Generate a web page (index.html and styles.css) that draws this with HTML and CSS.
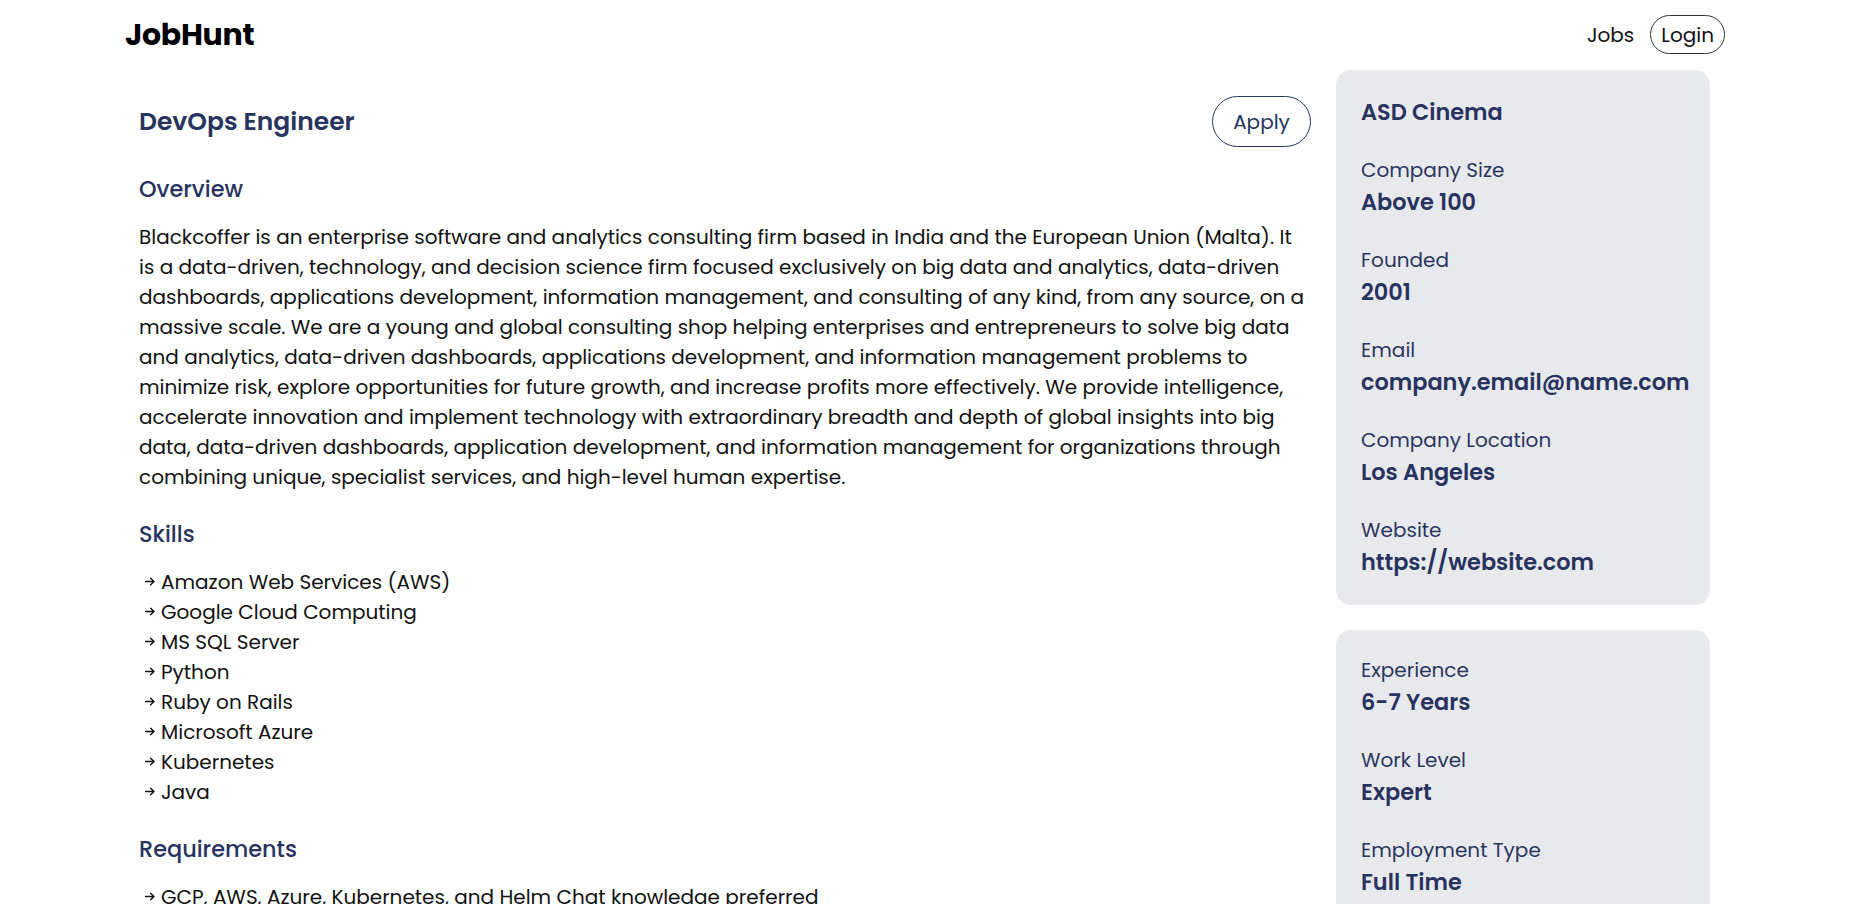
FILE: index.html
```html
<!DOCTYPE html>
<html lang="en">
<head>
<meta charset="utf-8">
<title>JobHunt - DevOps Engineer</title>
<link rel="stylesheet" href="styles.css">
</head>
<body>
<div class="container">
  <header class="header">
    <a class="logo" href="#">JobHunt</a>
    <nav class="nav">
      <a class="nav-link" href="#">Jobs</a>
      <a class="nav-login" href="#">Login</a>
    </nav>
  </header>

  <main class="main">
    <section class="job">
      <div class="job-head">
        <h1 class="job-title">DevOps Engineer</h1>
        <button class="apply-btn">Apply</button>
      </div>

      <h3 class="section-title">Overview</h3>
      <p class="body-text">Blackcoffer is an enterprise software and analytics consulting firm based in India and the European Union (Malta). It is a data-driven, technology, and decision science firm focused exclusively on big data and analytics, data-driven dashboards, applications development, information management, and consulting of any kind, from any source, on a massive scale. We are a young and global consulting shop helping enterprises and entrepreneurs to solve big data and analytics, data-driven dashboards, applications development, and information management problems to minimize risk, explore opportunities for future growth, and increase profits more effectively. We provide intelligence, accelerate innovation and implement technology with extraordinary breadth and depth of global insights into big data, data-driven dashboards, application development, and information management for organizations through combining unique, specialist services, and high-level human expertise.</p>

      <h3 class="section-title">Skills</h3>
      <ul class="arrow-list">
        <li><svg class="arrow" viewBox="0 0 10 9" width="10" height="9"><path d="M0.5 4.5H9M5.6 1.2L9 4.5L5.6 7.8"/></svg>Amazon Web Services (AWS)</li>
        <li><svg class="arrow" viewBox="0 0 10 9" width="10" height="9"><path d="M0.5 4.5H9M5.6 1.2L9 4.5L5.6 7.8"/></svg>Google Cloud Computing</li>
        <li><svg class="arrow" viewBox="0 0 10 9" width="10" height="9"><path d="M0.5 4.5H9M5.6 1.2L9 4.5L5.6 7.8"/></svg>MS SQL Server</li>
        <li><svg class="arrow" viewBox="0 0 10 9" width="10" height="9"><path d="M0.5 4.5H9M5.6 1.2L9 4.5L5.6 7.8"/></svg>Python</li>
        <li><svg class="arrow" viewBox="0 0 10 9" width="10" height="9"><path d="M0.5 4.5H9M5.6 1.2L9 4.5L5.6 7.8"/></svg>Ruby on Rails</li>
        <li><svg class="arrow" viewBox="0 0 10 9" width="10" height="9"><path d="M0.5 4.5H9M5.6 1.2L9 4.5L5.6 7.8"/></svg>Microsoft Azure</li>
        <li><svg class="arrow" viewBox="0 0 10 9" width="10" height="9"><path d="M0.5 4.5H9M5.6 1.2L9 4.5L5.6 7.8"/></svg>Kubernetes</li>
        <li><svg class="arrow" viewBox="0 0 10 9" width="10" height="9"><path d="M0.5 4.5H9M5.6 1.2L9 4.5L5.6 7.8"/></svg>Java</li>
      </ul>

      <h3 class="section-title">Requirements</h3>
      <ul class="arrow-list">
        <li><svg class="arrow" viewBox="0 0 10 9" width="10" height="9"><path d="M0.5 4.5H9M5.6 1.2L9 4.5L5.6 7.8"/></svg>GCP, AWS, Azure, Kubernetes, and Helm Chat knowledge preferred</li>
        <li><svg class="arrow" viewBox="0 0 10 9" width="10" height="9"><path d="M0.5 4.5H9M5.6 1.2L9 4.5L5.6 7.8"/></svg>Experience with CI/CD pipelines and infrastructure as code</li>
        <li><svg class="arrow" viewBox="0 0 10 9" width="10" height="9"><path d="M0.5 4.5H9M5.6 1.2L9 4.5L5.6 7.8"/></svg>Strong scripting skills in Bash and Python</li>
      </ul>
    </section>

    <aside class="sidebar">
      <div class="card">
        <h2 class="card-title">ASD Cinema</h2>
        <div class="info">
          <div class="info-label">Company Size</div>
          <div class="info-value">Above 100</div>
        </div>
        <div class="info">
          <div class="info-label">Founded</div>
          <div class="info-value">2001</div>
        </div>
        <div class="info">
          <div class="info-label">Email</div>
          <div class="info-value">company.email@name.com</div>
        </div>
        <div class="info">
          <div class="info-label">Company Location</div>
          <div class="info-value">Los Angeles</div>
        </div>
        <div class="info">
          <div class="info-label">Website</div>
          <div class="info-value">https://website.com</div>
        </div>
      </div>

      <div class="card card-second">
        <div class="info">
          <div class="info-label">Experience</div>
          <div class="info-value">6-7 Years</div>
        </div>
        <div class="info">
          <div class="info-label">Work Level</div>
          <div class="info-value">Expert</div>
        </div>
        <div class="info">
          <div class="info-label">Employment Type</div>
          <div class="info-value">Full Time</div>
        </div>
        <div class="info">
          <div class="info-label">Salary</div>
          <div class="info-value">$150k/yr</div>
        </div>
      </div>
    </aside>
  </main>
</div>
</body>
</html>
```

FILE: styles.css
```css
* {
  box-sizing: border-box;
}

html, body {
  margin: 0;
  padding: 0;
  background: #ffffff;
}

body {
  font-family: "Poppins", "Open Sans", "Noto Sans", sans-serif;
  color: #111111;
}

a {
  text-decoration: none;
  color: inherit;
}

.container {
  width: 1600px;
  margin: 0 auto;
}

/* Header */
.header {
  height: 69px;
  display: flex;
  align-items: center;
  justify-content: space-between;
}

.logo {
  font-size: 30px;
  font-weight: 700;
  color: #000000;
  letter-spacing: -0.3px;
}

.nav {
  display: flex;
  align-items: center;
  gap: 16px;
}

.nav-link {
  font-size: 20px;
  color: #111111;
}

.nav-login {
  font-size: 20px;
  color: #111111;
  border: 1px solid #333333;
  border-radius: 999px;
  height: 39px;
  padding: 0 10px;
  display: flex;
  align-items: center;
}

/* Main layout */
.main {
  display: flex;
  align-items: flex-start;
  gap: 25px;
  padding: 0 15px 0 14px;
}

.job {
  flex: 1;
  min-width: 0;
  padding-top: 27px;
}

.job-head {
  display: flex;
  align-items: center;
  justify-content: space-between;
}

.job-title {
  margin: 0;
  font-size: 25px;
  line-height: 36px;
  font-weight: 600;
  color: #283360;
}

.apply-btn {
  font-family: inherit;
  font-size: 20px;
  line-height: 30px;
  color: #283360;
  background: #ffffff;
  border: 1.5px solid #283360;
  border-radius: 999px;
  width: 99px;
  height: 51px;
  padding: 0;
  cursor: pointer;
}

.section-title {
  margin: 26px 0 16px;
  font-size: 22.4px;
  line-height: 33px;
  font-weight: 500;
  color: #283360;
}

.body-text {
  margin: 0;
  font-size: 20px;
  line-height: 30px;
  color: #111111;
}

.arrow-list {
  list-style: none;
  margin: 0;
  padding: 0;
}

.arrow-list li {
  font-size: 20px;
  line-height: 30px;
  color: #111111;
}

.arrow {
  margin: 0 6px 0 6px;
  vertical-align: 3px;
  fill: none;
  stroke: #111111;
  stroke-width: 1.4;
  stroke-linecap: round;
  stroke-linejoin: round;
}

/* Sidebar */
.sidebar {
  width: 374px;
  flex-shrink: 0;
  margin-top: 1px;
  display: flex;
  flex-direction: column;
  gap: 25px;
}

.card {
  background: #e8e9ed;
  border-radius: 15px;
  padding: 25px 25px 26px;
  display: flex;
  flex-direction: column;
  gap: 26px;
}

.card-second {
  padding-top: 25px;
}

.card-title {
  margin: 0;
  font-size: 22.4px;
  line-height: 34px;
  font-weight: 600;
  color: #283360;
}

.info {
  display: flex;
  flex-direction: column;
}

.info-label {
  font-size: 20px;
  line-height: 30px;
  color: #2b3562;
}

.info-value {
  margin-top: 1px;
  font-size: 22.4px;
  line-height: 33px;
  font-weight: 600;
  color: #283360;
}
```
